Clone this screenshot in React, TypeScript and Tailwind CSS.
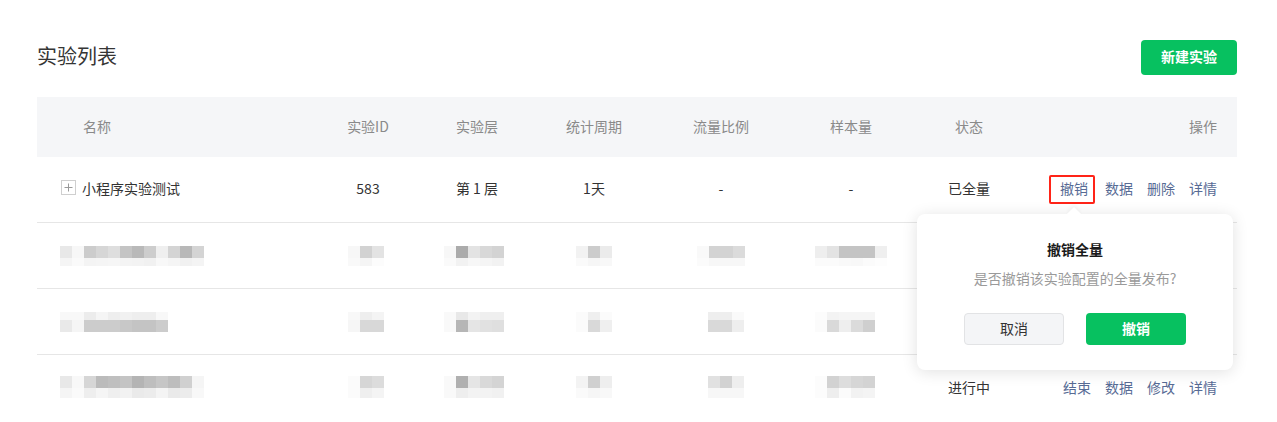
type Cell = { top: string[]; bottom: string[]; off?: string };
type BlurRow = { th: string; bh: string; cells: Cell[] };

const cols =
  "grid grid-cols-[279px_104px_114px_120px_134px_126px_110px_213px] items-center";

// pixelated rows (rows 2-4 were mosaicked in the screenshot)
const blurRows: BlurRow[] = [
  {
    th: "h-[12px]",
    bh: "h-[8px]",
    cells: [
      {
        top: ["bg-[#e8e8e8]", "bg-[#f7f7f7]", "bg-[#cccccc]", "bg-[#d6d6d6]", "bg-[#dedede]", "bg-[#c4c4c4]", "bg-[#b9b9b9]", "bg-[#cdcdcd]", "bg-[#efefef]", "bg-[#d4d4d4]", "bg-[#b8b8b8]", "bg-[#d4d4d4]"],
        bottom: ["bg-[#f5f5f5]", "bg-[#fafafa]", "bg-[#f4f4f4]", "bg-[#f5f5f5]", "bg-[#f6f6f6]", "bg-[#f4f4f4]", "bg-[#f3f3f3]", "bg-[#f1f1f1]", "bg-[#f8f8f8]", "bg-[#f5f5f5]", "bg-[#f1f1f1]", "bg-[#f4f4f4]"],
      },
      { top: ["bg-[#f7f7f7]", "bg-[#d2d2d2]", "bg-[#e3e3e3]"], bottom: ["bg-[#f9f9f9]", "bg-[#f5f5f5]", "bg-[#fcfcfc]"], off: "mr-[4px]" },
      {
        top: ["bg-[#f7f7f7]", "bg-[#ababab]", "bg-[#e3e3e3]", "bg-[#d8d8d8]", "bg-[#d3d3d3]"],
        bottom: ["bg-[#fafafa]", "bg-[#f2f2f2]", "bg-[#f7f7f7]", "bg-[#f5f5f5]", "bg-[#f2f2f2]"],
        off: "mr-[6px]",
      },
      { top: ["bg-[#f2f2f2]", "bg-[#cccccc]", "bg-[#ebebeb]"], bottom: ["bg-[#fafafa]", "bg-[#f6f6f6]", "bg-[#f8f8f8]"] },
      {
        top: ["bg-[#f9f9f9]", "bg-[#d3d3d3]", "bg-[#d3d3d3]", "bg-[#dbdbdb]"],
        bottom: ["bg-[#fbfbfb]", "bg-[#f7f7f7]", "bg-[#f7f7f7]", "bg-[#f7f7f7]"],
      },
      {
        top: ["bg-[#eeeeee]", "bg-[#e3e3e3]", "bg-[#c4c4c4]", "bg-[#c4c4c4]", "bg-[#c4c4c4]", "bg-[#efefef]"],
        bottom: ["bg-[#fbfbfb]", "bg-[#fbfbfb]", "bg-[#f9f9f9]", "bg-[#f8f8f8]", "bg-[#fbfbfb]", "bg-[#fdfdfd]"],
      },
    ],
  },
  {
    th: "h-[8px]",
    bh: "h-[12px]",
    cells: [
      {
        top: ["bg-[#f8f8f8]", "bg-[#f8f8f8]", "bg-[#ececec]", "bg-[#f5f5f5]", "bg-[#eeeeee]", "bg-[#f1f1f1]", "bg-[#eeeeee]", "bg-[#eeeeee]", "bg-[#f8f8f8]"],
        bottom: ["bg-[#e9e9e9]", "bg-[#f5f5f5]", "bg-[#cccccc]", "bg-[#cccccc]", "bg-[#cccccc]", "bg-[#c8c8c8]", "bg-[#c4c4c4]", "bg-[#c4c4c4]", "bg-[#cccccc]"],
      },
      { top: ["bg-[#f8f8f8]", "bg-[#eeeeee]", "bg-[#f4f4f4]"], bottom: ["bg-[#f6f6f6]", "bg-[#d8d8d8]", "bg-[#d8d8d8]"], off: "mr-[4px]" },
      {
        top: ["bg-[#f9f9f9]", "bg-[#e8e8e8]", "bg-[#f3f3f3]", "bg-[#efefef]", "bg-[#efefef]"],
        bottom: ["bg-[#f9f9f9]", "bg-[#b6b6b6]", "bg-[#e5e5e5]", "bg-[#e1e1e1]", "bg-[#dfdfdf]"],
        off: "mr-[6px]",
      },
      { top: ["bg-[#fbfbfb]", "bg-[#efefef]", "bg-[#fbfbfb]"], bottom: ["bg-[#fbfbfb]", "bg-[#d9d9d9]", "bg-[#efefef]"] },
      { top: ["bg-[#eeeeee]", "bg-[#eeeeee]", "bg-[#fafafa]"], bottom: ["bg-[#d9d9d9]", "bg-[#d9d9d9]", "bg-[#eeeeee]"], off: "ml-[10px]" },
      {
        top: ["bg-[#fcfcfc]", "bg-[#f3f3f3]", "bg-[#f5f5f5]", "bg-[#f5f5f5]", "bg-[#f5f5f5]"],
        bottom: ["bg-[#fbfbfb]", "bg-[#d9d9d9]", "bg-[#eeeeee]", "bg-[#dbdbdb]", "bg-[#cfcfcf]"],
        off: "mr-[12px]",
      },
    ],
  },
  {
    th: "h-[12px]",
    bh: "h-[10px]",
    cells: [
      {
        top: ["bg-[#e8e8e8]", "bg-[#f8f8f8]", "bg-[#d6d6d6]", "bg-[#bbbbbb]", "bg-[#bfbfbf]", "bg-[#c4c4c4]", "bg-[#b4b4b4]", "bg-[#bebebe]", "bg-[#c6c6c6]", "bg-[#bdbdbd]", "bg-[#d0d0d0]", "bg-[#f5f5f5]"],
        bottom: ["bg-[#f5f5f5]", "bg-[#fafafa]", "bg-[#eeeeee]", "bg-[#f5f5f5]", "bg-[#efefef]", "bg-[#f2f2f2]", "bg-[#eaeaea]", "bg-[#ececec]", "bg-[#f4f4f4]", "bg-[#eaeaea]", "bg-[#ececec]", "bg-[#f8f8f8]"],
      },
      { top: ["bg-[#fbfbfb]", "bg-[#d6d6d6]", "bg-[#dcdcdc]"], bottom: ["bg-[#fbfbfb]", "bg-[#efefef]", "bg-[#f4f4f4]"], off: "mr-[4px]" },
      {
        top: ["bg-[#f9f9f9]", "bg-[#b0b0b0]", "bg-[#e5e5e5]", "bg-[#d9d9d9]", "bg-[#d4d4d4]"],
        bottom: ["bg-[#f9f9f9]", "bg-[#eeeeee]", "bg-[#f3f3f3]", "bg-[#f3f3f3]", "bg-[#f1f1f1]"],
        off: "mr-[6px]",
      },
      { top: ["bg-[#f3f3f3]", "bg-[#d0d0d0]", "bg-[#eeeeee]"], bottom: ["bg-[#fafafa]", "bg-[#f6f6f6]", "bg-[#f8f8f8]"] },
      { top: ["bg-[#e1e1e1]", "bg-[#d2d2d2]", "bg-[#eeeeee]"], bottom: ["bg-[#f7f7f7]", "bg-[#f7f7f7]", "bg-[#f7f7f7]"], off: "ml-[10px]" },
      {
        top: ["bg-[#fcfcfc]", "bg-[#d2d2d2]", "bg-[#dddddd]", "bg-[#d6d6d6]", "bg-[#d3d3d3]"],
        bottom: ["bg-[#fcfcfc]", "bg-[#eeeeee]", "bg-[#fbfbfb]", "bg-[#f2f2f2]", "bg-[#f4f4f4]"],
        off: "mr-[12px]",
      },
    ],
  },
];

function Mosaic({ cell, th, bh }: { cell: Cell; th: string; bh: string }) {
  return (
    <div className={`flex flex-col ${cell.off ?? ""}`}>
      <div className="flex">
        {cell.top.map((c, i) => (
          <div key={i} className={`w-[12px] ${th} ${c}`} />
        ))}
      </div>
      <div className="flex">
        {cell.bottom.map((c, i) => (
          <div key={i} className={`w-[12px] ${bh} ${c}`} />
        ))}
      </div>
    </div>
  );
}

function Link({ children, className = "" }: { children: React.ReactNode; className?: string }) {
  return <span className={`text-[#576b95] cursor-pointer ${className}`}>{children}</span>;
}

function Popover() {
  return (
    <div className="absolute left-[-143px] top-[37px] z-10 w-[316px] h-[156px] rounded-[8px] bg-white shadow-[0_2px_16px_rgba(0,0,0,0.12)] flex flex-col items-center pt-[24px]">
      <div className="absolute top-[-5px] left-[152px] w-[10px] h-[10px] rotate-45 bg-white shadow-[-2px_-2px_4px_rgba(0,0,0,0.04)]" />
      <div className="relative text-[14px] leading-[22px] font-semibold text-[#1a1a1a]">撤销全量</div>
      <div className="mt-[7px] text-[14px] leading-[22px] text-[#9a9a9a]">是否撤销该实验配置的全量发布?</div>
      <div className="mt-[24px] flex gap-[22px]">
        <button className="w-[100px] h-[32px] rounded-[4px] border border-[#e2e3e5] bg-[#f4f5f7] text-[14px] text-[#333] pb-[2px]">
          取消
        </button>
        <button className="w-[100px] h-[32px] rounded-[4px] bg-[#07c160] text-[14px] font-semibold text-white pb-[2px]">
          撤销
        </button>
      </div>
    </div>
  );
}

export default function App() {
  return (
    <div className="w-[1277px] h-[422px] bg-white px-[37px] pt-[40px] font-['Noto_Sans_CJK_SC',sans-serif] text-[#333] overflow-hidden">
      <div className="w-[1200px] flex items-center justify-between h-[35px]">
        <h1 className="text-[20px] font-normal text-[#353535] leading-[28px] pb-[4px]">实验列表</h1>
        <button className="w-[96px] h-[35px] rounded-[4px] bg-[#07c160] text-white text-[14px] font-semibold pb-[2px]">
          新建实验
        </button>
      </div>

      <div className="mt-[22px] w-[1200px]">
        <div className={`${cols} h-[60px] bg-[#f5f6f8] text-[14px] text-[#8a8a8a] pb-[2px]`}>
          <div className="pl-[46px]">名称</div>
          <div className="text-center">实验ID</div>
          <div className="text-center">实验层</div>
          <div className="text-center">统计周期</div>
          <div className="text-center">流量比例</div>
          <div className="text-center">样本量</div>
          <div className="text-center">状态</div>
          <div className="text-right pr-5">操作</div>
        </div>

        <div className={`${cols} h-[66px] border-b border-[#e6e6e6] text-[14px] leading-[22px] text-[#333] pb-[4px]`}>
          <div className="pl-6 flex items-center gap-[6px]">
            <span className="w-[15px] h-[15px] border border-[#cfcfcf] flex items-center justify-center">
              <svg width="9" height="9" viewBox="0 0 9 9">
                <path d="M4.5 0.5V8.5M0.5 4.5H8.5" stroke="#999" strokeWidth="1" />
              </svg>
            </span>
            <span>小程序实验测试</span>
          </div>
          <div className="text-center">583</div>
          <div className="text-center">第 1 层</div>
          <div className="text-center">1天</div>
          <div className="text-center">-</div>
          <div className="text-center">-</div>
          <div className="text-center">已全量</div>
          <div className="flex justify-end gap-[14px] pr-5">
            <span className="relative mr-[3px]">
              <Link>撤销</Link>
              <span className="absolute -left-[11px] -right-[7px] -top-[2px] -bottom-[5px] border-2 border-[#ff2418] rounded-[2px]" />
              <Popover />
            </span>
            <Link>数据</Link>
            <Link>删除</Link>
            <Link>详情</Link>
          </div>
        </div>

        {blurRows.map((row, r) => (
          <div
            key={r}
            className={`${cols} h-[66px] text-[14px] leading-[22px] ${r < 2 ? "border-b border-[#e6e6e6]" : "pb-[2px]"}`}
          >
            <div className="pl-[23px]">
              <Mosaic cell={row.cells[0]} th={row.th} bh={row.bh} />
            </div>
            {row.cells.slice(1).map((c, i) => (
              <div key={i} className="flex justify-center">
                <Mosaic cell={c} th={row.th} bh={row.bh} />
              </div>
            ))}
            {r === 2 ? (
              <>
                <div className="text-center">进行中</div>
                <div className="flex justify-end gap-[14px] pr-5">
                  <Link>结束</Link>
                  <Link>数据</Link>
                  <Link>修改</Link>
                  <Link>详情</Link>
                </div>
              </>
            ) : (
              <>
                <div />
                <div />
              </>
            )}
          </div>
        ))}
      </div>
    </div>
  );
}
